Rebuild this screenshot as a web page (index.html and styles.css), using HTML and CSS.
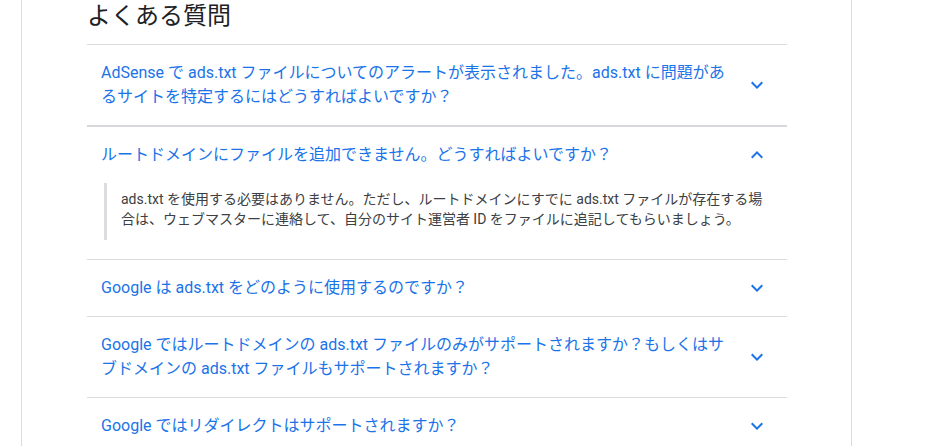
FILE: index.html
```html
<!DOCTYPE html>
<html lang="ja">
<head>
    <meta charset="UTF-8">
    <meta name="viewport" content="width=device-width, initial-scale=1.0">
    <title>よくある質問</title>
    <link rel="stylesheet" href="styles.css">
</head>
<body>
    <div class="page">
        <h2 class="faq-title">よくある質問</h2>
        <div class="faq">
            <div class="faq-item">
                <div class="faq-question">
                    <span class="faq-text">AdSense で ads.txt ファイルについてのアラートが表示されました。ads.txt に問題があるサイトを特定するにはどうすればよいですか？</span>
                    <svg class="chevron" viewBox="0 0 24 24"><path d="M16.59 8.59L12 13.17 7.41 8.59 6 10l6 6 6-6z"/></svg>
                </div>
            </div>
            <div class="faq-item open">
                <div class="faq-question">
                    <span class="faq-text">ルートドメインにファイルを追加できません。どうすればよいですか？</span>
                    <svg class="chevron" viewBox="0 0 24 24"><path d="M12 8l-6 6 1.41 1.41L12 10.83l4.59 4.58L18 14z"/></svg>
                </div>
                <div class="faq-answer">
                    <p>ads.txt を使用する必要はありません。ただし、ルートドメインにすでに ads.txt ファイルが存在する場合は、ウェブマスターに連絡して、自分のサイト運営者 ID をファイルに追記してもらいましょう。</p>
                </div>
            </div>
            <div class="faq-item">
                <div class="faq-question">
                    <span class="faq-text">Google は ads.txt をどのように使用するのですか？</span>
                    <svg class="chevron" viewBox="0 0 24 24"><path d="M16.59 8.59L12 13.17 7.41 8.59 6 10l6 6 6-6z"/></svg>
                </div>
            </div>
            <div class="faq-item">
                <div class="faq-question">
                    <span class="faq-text">Google ではルートドメインの ads.txt ファイルのみがサポートされますか？もしくはサブドメインの ads.txt ファイルもサポートされますか？</span>
                    <svg class="chevron" viewBox="0 0 24 24"><path d="M16.59 8.59L12 13.17 7.41 8.59 6 10l6 6 6-6z"/></svg>
                </div>
            </div>
            <div class="faq-item">
                <div class="faq-question">
                    <span class="faq-text">Google ではリダイレクトはサポートされますか？</span>
                    <svg class="chevron" viewBox="0 0 24 24"><path d="M16.59 8.59L12 13.17 7.41 8.59 6 10l6 6 6-6z"/></svg>
                </div>
            </div>
        </div>
    </div>
</body>
</html>
```

FILE: styles.css
```css
html, body {
    margin: 0;
    padding: 0;
    background: #fff;
}
body {
    font-family: Roboto, "Noto Sans CJK JP", sans-serif;
    color: #202124;
}
.page {
    margin-left: 21px;
    width: 700px;
    min-height: 100vh;
    padding: 0 64px 0 65px;
    border-left: 1px solid #dadce0;
    border-right: 1px solid #dadce0;
}
.faq-title {
    margin: 0;
    padding-bottom: 12px;
    font-size: 24px;
    line-height: 32px;
    font-weight: 400;
    color: #202124;
    border-bottom: 1px solid #dadce0;
}
.faq-item {
    border-bottom: 1px solid #dadce0;
}
.faq-item:first-child {
    border-bottom-color: #d6d8dc;
}
.faq-item.open {
    border-top: 1px solid #d6d8dc;
}
.faq-question {
    display: flex;
    align-items: center;
    padding: 16px 18px 16px 14px;
    cursor: pointer;
}
.faq-text {
    flex: 1;
    font-size: 16px;
    line-height: 24px;
    color: #1a73e8;
    padding-right: 7px;
}
.chevron {
    width: 24px;
    height: 24px;
    fill: #1a73e8;
    flex-shrink: 0;
}
.faq-answer {
    margin: 0 0 19px 17px;
    padding: 6px 20px 11px 14px;
    border-left: 3px solid #dadce0;
}
.faq-answer p {
    margin: 0;
    font-size: 14px;
    line-height: 20px;
    color: #3c4043;
}
```
